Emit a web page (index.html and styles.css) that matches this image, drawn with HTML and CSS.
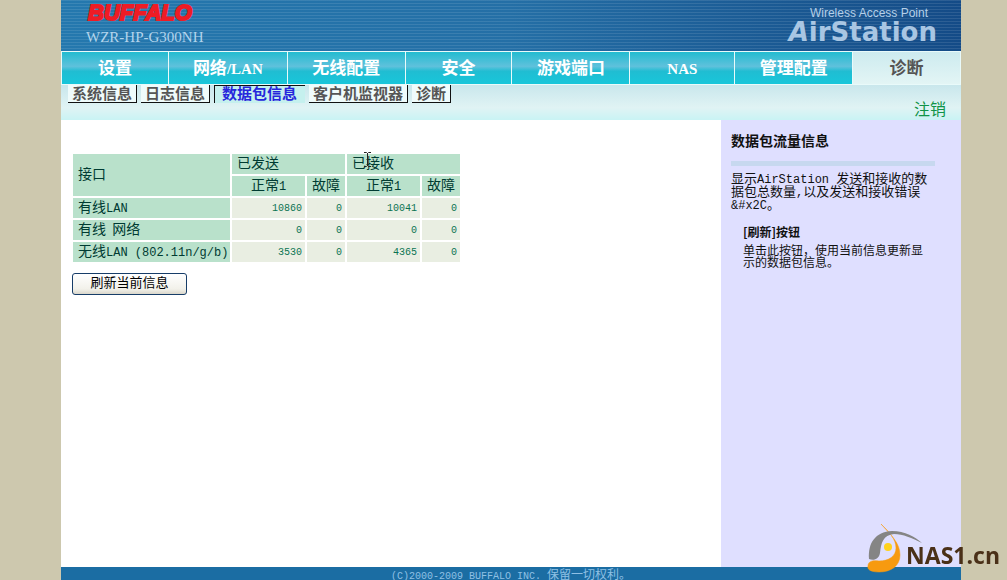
FILE: index.html
```html
<!DOCTYPE html>
<html lang="zh-CN">
<head>
<meta charset="utf-8">
<title>WZR-HP-G300NH - AirStation</title>
<link rel="stylesheet" href="styles.css">
</head>
<body>
<div class="page">
  <header class="banner">
    <div class="brand">
      <div class="logo">BUFFALO</div>
      <div class="model">WZR-HP-G300NH</div>
    </div>
    <div class="product">
      <div class="product-kind">Wireless Access Point</div>
      <div class="product-name"><i>A</i>irStation</div>
    </div>
  </header>
  <nav class="tabs">
    <a href="#">设置</a>
    <a href="#">网络<span class="latin">/LAN</span></a>
    <a href="#">无线配置</a>
    <a href="#">安全</a>
    <a href="#">游戏端口</a>
    <a href="#"><span class="latin">NAS</span></a>
    <a href="#">管理配置</a>
    <a href="#" class="current">诊断</a>
  </nav>
  <div class="subbar">
    <nav class="subtabs">
      <a href="#">系统信息</a>
      <a href="#">日志信息</a>
      <a href="#" class="current">数据包信息</a>
      <a href="#">客户机监视器</a>
      <a href="#">诊断</a>
    </nav>
    <a href="#" class="logout">注销</a>
  </div>
  <div class="content">
    <main class="main">
      <table class="stats">
        <thead>
          <tr><th rowspan="2" class="iface">接口</th><th colspan="2">已发送</th><th colspan="2" class="received">已接收
            <svg class="caret" width="7" height="15" viewBox="0 0 7 15" aria-hidden="true"><path d="M0 .5h2.5l1 1 1-1H7M3.5 1v13M0 14.5h2.5l1-1 1 1H7" fill="none" stroke="#222"/></svg></th></tr>
          <tr><th class="normal">正常<span class="latin">1</span></th><th class="error">故障</th><th class="normal">正常<span class="latin">1</span></th><th class="error">故障</th></tr>
        </thead>
        <tbody>
          <tr><th>有线<span class="latin">LAN</span></th><td>10860</td><td>0</td><td>10041</td><td>0</td></tr>
          <tr><th>有线 &nbsp;网络</th><td>0</td><td>0</td><td>0</td><td>0</td></tr>
          <tr><th>无线<span class="latin">LAN (802.11n/g/b)</span></th><td>3530</td><td>0</td><td>4365</td><td>0</td></tr>
        </tbody>
      </table>
      <button type="button" class="refresh">刷新当前信息</button>
    </main>
    <aside class="help">
      <h2>数据包流量信息</h2>
      <p>显示<span class="latin">AirStation </span>发送和接收的数据包总数量<span class="latin">,</span>以及发送和接收错误<br><span class="latin">&amp;#x2C</span>。</p>
      <dl>
        <dt>[刷新]按钮</dt>
        <dd>单击此按钮，使用当前信息更新显示的数据包信息。</dd>
      </dl>
    </aside>
  </div>
  <footer class="footer"><span class="latin">(C)2000-2009 BUFFALO INC. </span>保留一切权利。</footer>
</div>
<div class="watermark">
  <svg width="56" height="50" viewBox="0 0 56 50" aria-hidden="true">
    <path d="M14 1C24 12 33 20 33 32C33 43 24 49 12 49C3 49 0 46 1 43C1 38 6 37 12 38C22 38 29 33 29 25C29 16 22 9 14 1Z" fill="#f79a10" stroke="#f79a10" stroke-width=".5"/>
    <path d="M2 36C1 20 8 9 25 8C38 8 48 14 55 20C45 15 36 11 27 11C16 12 14 20 13 30C12 36 7 38 2 36Z" fill="#858585"/>
    <circle cx="21" cy="24" r="4" fill="#ffd21c"/>
  </svg>
  <span>NAS1.cn</span>
</div>
</body>
</html>
```
FILE: styles.css
```css
* { box-sizing: border-box; }
body {
  margin: 0;
  padding-left: 15px;
  background: #cdc8ae;
  color: #111;
  font-family: "Noto Sans CJK SC", sans-serif;
}
a { text-decoration: none; }
.latin {
  font-family: "Liberation Mono", "Noto Sans CJK SC", monospace;
  line-height: 0;
}
.page {
  display: flex;
  flex-direction: column;
  max-width: 900px;
  min-height: 100vh;
  margin: 0 auto;
  background: #fff;
}
.banner {
  display: flex;
  justify-content: space-between;
  height: 51px;
  padding: 0 24px 0 25px;
  background:
    repeating-linear-gradient(rgba(255, 255, 255, .1) 0 1px, transparent 1px 3px),
    linear-gradient(90deg, #2478ae, #246fa6 50%, #144b87);
}
.logo {
  padding-left: 2px;
  color: #ee1c25;
  font: italic bold 22px/26px "Liberation Sans", sans-serif;
  -webkit-text-stroke: 2px #ee1c25;
}
.model {
  color: #b3d4ec;
  font: 15px/23px "Liberation Serif", serif;
}
.product { text-align: right; }
.product-kind {
  padding: 5px 9px 0 0;
  color: #b4cfe8;
  font: 12px/16px "Liberation Sans", sans-serif;
}
.product-name {
  color: #a9c6e3;
  font: bold 26px/22px "DejaVu Sans", sans-serif;
}
.tabs {
  display: grid;
  grid-template-columns: 107fr 119fr 118fr 107fr 118fr 105fr 118fr 108fr;
  height: 34px;
  border: solid #e9fafa;
  border-width: 1px 0 1px 1px;
}
.tabs a {
  border-right: 1px solid #e9fafa;
  background: linear-gradient(#22bcd0, #5fc1dc 45%, #20bdd2 60%, #18c6da);
  color: #fff;
  font-size: 17px;
  font-weight: bold;
  line-height: 30px;
  text-align: center;
}
.tabs .latin {
  font-family: "Liberation Serif", serif;
  font-size: 15px;
}
.tabs .current {
  background: linear-gradient(#cdebef, #e3f5f5);
  color: #555;
}
.subbar {
  display: flex;
  justify-content: space-between;
  height: 35px;
  padding: 0 15px 0 7px;
  background: linear-gradient(#c9e7ec, #e0f3f4 65%, #c9f3f4);
}
.subtabs {
  display: flex;
  align-items: flex-start;
  gap: 4px;
}
.subtabs a {
  height: 18px;
  padding: 0 4px;
  border: solid #111;
  border-width: 0 1px 1px 0;
  background: #effbfb;
  color: #555;
  font-size: 15px;
  font-weight: bold;
  line-height: 15px;
}
.subtabs .current {
  padding: 0 8px 0 7px;
  border-width: 1px 0 0 1px;
  background: #c5f0ee;
  color: #2727dc;
  line-height: 13px;
}
.logout {
  color: #109448;
  font-size: 16px;
  line-height: 46px;
}
.content {
  display: flex;
  flex: 1;
}
.main {
  flex: 1;
  padding: 32px 10px;
}
.stats {
  border-spacing: 2px;
  color: #003b32;
}
.stats th {
  height: 20px;
  padding: 0 5px 4px;
  background: #b9e1cb;
  font-size: 14px;
  font-weight: normal;
  line-height: 16px;
  text-align: left;
  white-space: nowrap;
}
.stats tbody th { padding-right: 0; }
.stats .latin { font-size: 12px; }
.stats .iface { width: 157px; }
.stats .normal { width: 73px; text-align: center; }
.stats .error { width: 38px; }
.stats td {
  height: 20px;
  padding: 2px 3px 0;
  background: #e9eee2;
  color: #0b7452;
  font: 10px/18px "Liberation Mono", monospace;
  text-align: right;
}
.received { position: relative; }
.caret {
  position: absolute;
  top: -2px;
  left: 17px;
}
.refresh {
  display: block;
  width: 115px;
  height: 22px;
  margin: 9px 0 0 1px;
  padding: 0 0 4px;
  border: 1px solid #173d68;
  border-radius: 3px;
  background: linear-gradient(#fff, #f2f1ea 75%, #dad7cb);
  color: #000;
  font: 13px/16px "Noto Sans CJK SC", sans-serif;
}
.help {
  width: 240px;
  padding: 12px 26px 0 10px;
  background: #dfdfff;
}
.help h2 {
  margin: 0;
  padding-bottom: 13px;
  border-bottom: 5px solid #c7d8ef;
  font-size: 14px;
  line-height: 16px;
}
.help p {
  margin: 5px 0 16px;
  font-size: 13px;
  line-height: 13px;
}
.help dl {
  margin: 0 0 0 12px;
  padding-right: 8px;
  font-size: 12px;
  line-height: 12px;
}
.help p .latin { font-size: 12px; }
.help dt {
  padding-bottom: 6px;
  font-weight: bold;
}
.help dd { margin: 0; }
.footer {
  height: 13px;
  background: #1b6da3;
  color: #8fc0e4;
  font-size: 12px;
  line-height: 13px;
  text-align: center;
}
.footer .latin { font-size: 10px; }
.watermark {
  position: fixed;
  right: 7px;
  bottom: 7px;
  display: flex;
  align-items: flex-end;
}
.watermark svg { margin-right: -17px; }
.watermark span {
  color: #4a3018;
  font: bold 23px/36px "Open Sans", sans-serif;
}
```
